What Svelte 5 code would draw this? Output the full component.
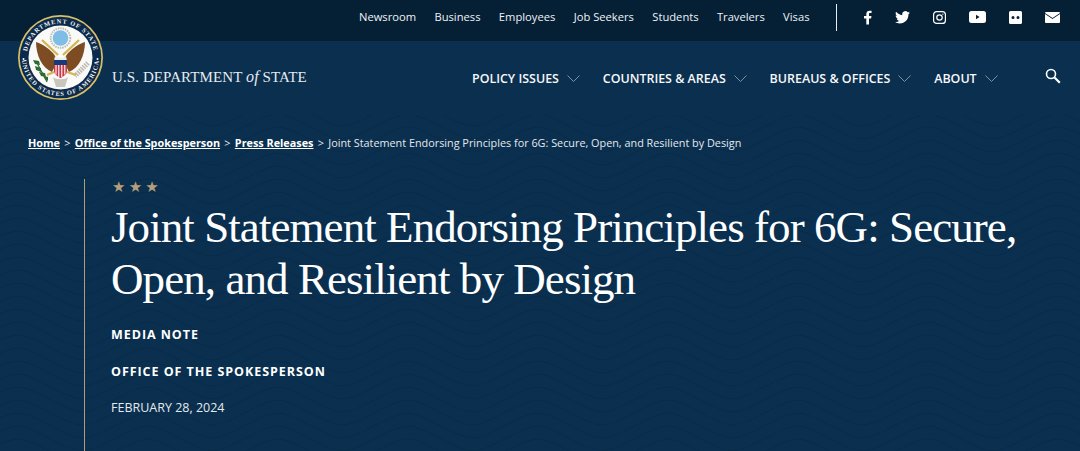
<script>
  const topLinks = ['Newsroom', 'Business', 'Employees', 'Job Seekers', 'Students', 'Travelers', 'Visas'];
  const mainLinks = ['POLICY ISSUES', 'COUNTRIES & AREAS', 'BUREAUS & OFFICES', 'ABOUT'];
  const crumbs = ['Home', 'Office of the Spokesperson', 'Press Releases'];
</script>

<div class="page">
  <svg class="waves" aria-hidden="true" width="1080" height="451">
    <defs>
      <pattern id="wave" width="130" height="13" patternUnits="userSpaceOnUse" x="-15" y="3">
        <path d="M-130 6.500 C -97 -10, -97 -10, -65 6.500 S -32 23, 0 6.500 C 33 -10, 33 -10, 65 6.500 S 98 23, 130 6.500 C 163 -10, 163 -10, 195 6.500" fill="none" stroke="#082b4a" stroke-width="1.200" />
        <path d="M-130 19.500 C -97 3, -97 3, -65 19.500 S -32 36, 0 19.500 C 33 3, 33 3, 65 19.500 S 98 36, 130 19.500" fill="none" stroke="#082b4a" stroke-width="1.200" />
        <path d="M-130 -6.500 C -97 -23, -97 -23, -65 -6.500 S -32 10, 0 -6.500 C 33 -23, 33 -23, 65 -6.500 S 98 10, 130 -6.500" fill="none" stroke="#082b4a" stroke-width="1.200" />
      </pattern>
    </defs>
    <rect width="1080" height="451" fill="url(#wave)" />
  </svg>

  <div class="topbar">
    <nav class="toplinks">
      {#each topLinks as l}<span>{l}</span>{/each}
    </nav>
    <div class="divider"></div>
    <div class="social">
      <svg width="8" height="15" viewBox="0 0 9 16"><path fill="#fff" d="M2.600 16V9H0V6.200h2.600V4.100C2.600 1.600 4.100.3 6.300.3c1 0 1.900.1 2.200.1V3H7C5.800 3 5.600 3.600 5.600 4.400v1.800h2.800L8 9H5.600v7z"/></svg>
      <svg width="15" height="13" viewBox="0 0 24 20"><path fill="#fff" d="M24 2.400c-.9.4-1.800.7-2.800.8 1-.6 1.800-1.600 2.200-2.700-1 .6-2 1-3.100 1.200A4.900 4.900 0 0 0 11.800 6.200C7.700 6 4.100 4 1.700.9c-1.300 2.300-.6 5.200 1.500 6.600-.8 0-1.600-.2-2.200-.6 0 2.300 1.600 4.400 3.900 4.900-.7.2-1.500.2-2.200.1.600 2 2.400 3.400 4.600 3.400A9.900 9.900 0 0 1 0 17.300 14 14 0 0 0 7.500 19.500c9.100 0 14.300-7.700 14-14.600 1-.7 1.800-1.500 2.500-2.500z"/></svg>
      <svg width="13" height="13" viewBox="0 0 13 13" fill="none" stroke="#fff" stroke-width="1.200"><rect x=".6" y=".6" width="11.800" height="11.800" rx="3"/><circle cx="6.500" cy="6.500" r="2.700"/><circle cx="9.900" cy="3.100" r=".7" fill="#fff" stroke="none"/></svg>
      <svg width="17" height="12" viewBox="0 0 17 12"><path fill="#fff" fill-rule="evenodd" d="M2.500 0h12A2.500 2.500 0 0 1 17 2.500v7a2.500 2.500 0 0 1-2.500 2.500h-12A2.500 2.500 0 0 1 0 9.500v-7A2.500 2.500 0 0 1 2.500 0zM7 3.800v4.400l3.600-2.200z"/></svg>
      <svg width="13" height="13" viewBox="0 0 13 13"><path fill="#fff" fill-rule="evenodd" d="M1.500 0h10A1.500 1.500 0 0 1 13 1.500v10a1.500 1.500 0 0 1-1.500 1.500h-10A1.500 1.500 0 0 1 0 11.500v-10A1.500 1.500 0 0 1 1.500 0zM4 5a1.500 1.500 0 1 0 0 3 1.500 1.500 0 0 0 0-3zm5 0a1.500 1.500 0 1 0 0 3 1.500 1.500 0 0 0 0-3z"/></svg>
      <svg width="15" height="11" viewBox="0 0 15 11"><path fill="#fff" d="M1 0h13a1 1 0 0 1 1 1v.1L7.500 6 0 1.100V1a1 1 0 0 1 1-1zM0 1.900l7.500 5 7.500-5V10a1 1 0 0 1-1 1H1a1 1 0 0 1-1-1z"/></svg>
    </div>
  </div>

  <header class="mainbar">
    <div class="wordmark">U.S. DEPARTMENT <i>of</i> STATE</div>
    <nav class="mainlinks">
      {#each mainLinks as l}
        <span class="item">{l}<svg width="13" height="7" viewBox="0 0 13 7" fill="none" stroke="#7f90a1" stroke-width="1"><path d="M.5.500l6 6 6-6"/></svg></span>
      {/each}
    </nav>
    <svg class="search" width="16" height="16" viewBox="0 0 16 16" fill="none" stroke="#fff"><circle cx="6" cy="6" r="4.500" stroke-width="1.600"/><path d="M9.500 9.500l5.300 5.300" stroke-width="2.200"/></svg>
  </header>

  <svg class="seal" width="87" height="87" viewBox="0 0 87 87" aria-hidden="true">
    <defs>
      <path id="arcTop" d="M9.500 43.500 A34 34 0 0 1 77.500 43.500" />
      <path id="arcBot" d="M5.100 43.500 A38.400 38.400 0 0 0 81.900 43.500" />
    </defs>
    <circle cx="43.500" cy="43.500" r="42.500" fill="#d8c069" />
    <circle cx="43.500" cy="43.500" r="40.800" fill="#0b2a4c" />
    <circle cx="43.500" cy="43.500" r="32" fill="#f9f9f7" />
    <text class="sealtext" letter-spacing="1"><textPath href="#arcTop" startOffset="50%" text-anchor="middle">DEPARTMENT OF STATE</textPath></text>
    <text class="sealtext" letter-spacing="1"><textPath href="#arcBot" startOffset="50%" text-anchor="middle">UNITED STATES OF AMERICA</textPath></text>
    <circle cx="6.500" cy="45" r="1" fill="#fff"/><circle cx="80.500" cy="45" r="1" fill="#fff"/>
    <circle cx="43.500" cy="24" r="9.800" fill="none" stroke="#bdbdb6" stroke-width="2" stroke-dasharray="1.500 .9"/>
    <circle cx="43.500" cy="24" r="7.800" fill="#7fbce6"/>
    <path d="M25 26l16 15M62 26L46 41" stroke="#d4b44e" stroke-width="2.200" fill="none"/>
    <path d="M36 39 C30 33 25 30 19 28 C19 41 25 54 35 58 L41 46z" fill="#7d4c22"/>
    <path d="M51 39 C57 33 62 30 68 28 C68 41 62 54 52 58 L46 46z" fill="#7d4c22"/>
    <path d="M38 42c2 3 9 3 11 0l1 5H37z" fill="#efeee8"/>
    <path d="M36 63c3 3 12 3 15 0l-3 10h-9z" fill="#c9c7bd"/>
    <path d="M37 46h13v11c0 3-3.500 5.500-6.500 7-3-1.500-6.500-4-6.500-7z" fill="#c8374a"/>
    <path d="M37 46h13v5H37z" fill="#173a7d"/>
    <path d="M39 51v9.500M41.800 51v12M44.800 51v12M47.800 51v9.500" stroke="#fff" stroke-width="1.100"/>
    <path d="M19 47l11 21" stroke="#2d6a35" stroke-width="1.200" fill="none"/>
    <path d="M16 46l6 1 1 4-5-1zM18 52l6 2 0 4-5-2zM22 58l6 1 1 4-5-1zM27 62l4 1 0 4-3-2z" fill="#2d6a35"/>
    <path d="M71 49L58 62" stroke="#bcbaae" stroke-width="5" stroke-dasharray="1.500 1"/>
    <path d="M37 58l-7 3M50 58l9 3" stroke="#d4b44e" stroke-width="2.200"/>
  </svg>

  <div class="crumbs">
    {#each crumbs as c}<a href="#top">{c}</a><span class="sep">&gt;</span>{/each}
    <span>Joint Statement Endorsing Principles for 6G: Secure, Open, and Resilient by Design</span>
  </div>

  <main class="hero">
    <div class="stars">★★★</div>
    <h1>Joint Statement Endorsing Principles for 6G: Secure, Open, and Resilient by Design</h1>
    <p class="label first">MEDIA NOTE</p>
    <p class="label">OFFICE OF THE SPOKESPERSON</p>
    <p class="date">FEBRUARY 28, 2024</p>
  </main>
</div>

<style>
  :global(body) { margin: 0; background: #0a2f4f; }
  .page {
    position: relative;
    width: 1080px;
    height: 451px;
    overflow: hidden;
    background: #0a2f4f;
    color: #fff;
    font-family: "Open Sans", sans-serif;
  }
  .waves { position: absolute; left: 0; top: 0; }
  .topbar {
    position: relative;
    height: 41px;
    background: #051f35;
    display: flex;
    align-items: flex-start;
    padding-left: 359px;
    box-sizing: border-box;
  }
  .toplinks {
    display: flex;
    gap: 18.350px;
    font-size: 11.200px;
    line-height: 16px;
    padding-top: 9px;
    color: #eef2f5;
  }
  .divider { width: 1px; height: 27px; margin: 4px 0 0 27px; background: #e8edf1; }
  .social {
    display: flex;
    align-items: center;
    height: 34px;
    margin-left: 27px;
    gap: 23px;
  }
  .seal { position: absolute; left: 17px; top: 14px; z-index: 2; }
  .sealtext { font: 700 6.300px "Liberation Serif", serif; fill: #f4f4f0; }
  .mainbar {
    position: relative;
    height: 74px;
    display: flex;
    align-items: center;
    background: #0a2f4f;
  }
  .wordmark {
    margin: 0 0 0 112px;
    width: 360px;
    font: 15px "Liberation Serif", serif;
    color: #e6ebef;
    letter-spacing: .1px;
    padding-bottom: 2px;
  }
  .wordmark i { font-size: 16px; }
  .mainlinks {
    display: flex;
    gap: 22.800px;
    font-size: 12.450px;
    font-weight: 600;
    color: #f6f8fa;
  }
  .item { display: flex; align-items: center; gap: 8px; }
  .search { position: absolute; left: 1045px; top: 27px; }
  .crumbs {
    position: relative;
    margin: 20px 0 0 28px;
    font-size: 10.840px;
    line-height: 16px;
    display: flex;
    color: #e4e9ed;
    white-space: nowrap;
  }
  .crumbs a { color: #fff; font-weight: 700; }
  .sep { margin: 0 4.300px; }
  .hero {
    position: relative;
    margin: 28px 0 0 84px;
    height: 280px;
    padding: 0 30px 0 26px;
    border-left: 1px solid #b39b74;
  }
  .stars { font: 15px/16px "DejaVu Sans", sans-serif; color: #b59e7c; letter-spacing: 3.200px; margin-left: 1px; margin-top: 1px; }
  h1 {
    margin: 6px 0 0;
    font: 400 45px/52px "Liberation Serif", serif;
    letter-spacing: -.93px;
    color: #fff;
    width: 930px;
  }
  .label {
    margin: 0;
    padding-top: 21px;
    font-size: 12.500px;
    line-height: 16px;
    font-weight: 700;
    letter-spacing: .95px;
  }
  .label.first { padding-top: 22px; }
  .date { margin: 20px 0 0; font-size: 12.500px; line-height: 16px; color: #e4e9ed; }
</style>
